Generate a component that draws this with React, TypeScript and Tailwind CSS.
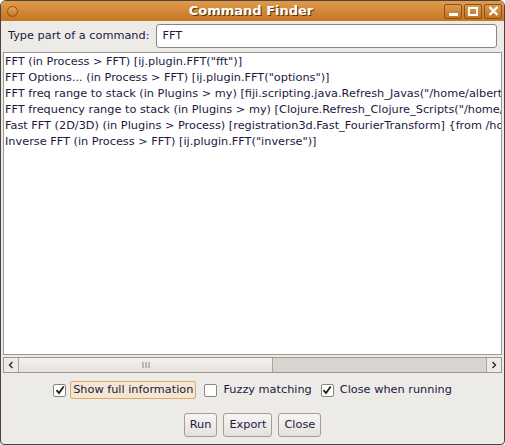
import { ReactNode } from 'react';

const rows = [
  'FFT (in Process > FFT) [ij.plugin.FFT("fft")]',
  'FFT Options... (in Process > FFT) [ij.plugin.FFT("options")]',
  'FFT freq range to stack (in Plugins > my) [fiji.scripting.java.Refresh_Javas("/home/albert/',
  'FFT frequency range to stack (in Plugins > my) [Clojure.Refresh_Clojure_Scripts("/home/',
  'Fast FFT (2D/3D) (in Plugins > Process) [registration3d.Fast_FourierTransform] {from /home',
  'Inverse FFT (in Process > FFT) [ij.plugin.FFT("inverse")]',
];

function Check({ checked }: { checked: boolean }) {
  return (
    <span className="flex h-[13px] w-[13px] shrink-0 items-center justify-center rounded-[2px] border border-[#8a8580] bg-white">
      {checked && (
        <svg width="10" height="10" viewBox="0 0 10 10">
          <path d="M1.5 5.2 L4 8 L8.7 1.5" fill="none" stroke="#1c1c1c" strokeWidth="1.8" />
        </svg>
      )}
    </span>
  );
}

function TitleButton({ children }: { children: ReactNode }) {
  return (
    <span className="flex h-[15px] w-[18px] items-center justify-center rounded-[2px] border border-[#8a5214] bg-gradient-to-b from-[#dc9a50] to-[#c2731f]">
      {children}
    </span>
  );
}

function Button({ label }: { label: string }) {
  return (
    <button className="h-[24px] rounded-[3px] border border-[#a29d96] bg-gradient-to-b from-[#f7f6f5] to-[#e4e1dd] px-[5px] text-[11.3px] text-[#231942]">
      {label}
    </button>
  );
}

export default function App() {
  return (
    <div
      className="flex h-[445px] w-[505px] flex-col overflow-hidden rounded-t-[6px] rounded-b-[4px] border border-[#4a443e] bg-[#edebe8] text-[#22173f]"
      style={{ fontFamily: '"DejaVu Sans", sans-serif' }}
    >
      {/* Title bar */}
      <div className="relative flex h-[20px] shrink-0 items-center bg-gradient-to-b from-[#e19a4c] to-[#c5761f] pl-[6px] pr-[2px]">
        <span className="h-[11px] w-[11px] rounded-full border border-[#8a5214] bg-gradient-to-b from-[#e8a860] to-[#c27420]" />
        <span
          className="flex-1 pl-[40px] text-center text-[13px] font-bold text-white"
          style={{ textShadow: '1px 1px 0 #5a3208' }}
        >
          Command Finder
        </span>
        <div className="flex gap-[2px]">
          <TitleButton>
            <span className="mt-[6px] h-[3px] w-[9px] bg-white" />
          </TitleButton>
          <TitleButton>
            <span className="h-[9px] w-[10px] border-2 border-white" />
          </TitleButton>
          <TitleButton>
            <svg width="11" height="10" viewBox="0 0 11 10">
              <path d="M1.5 1 L9.5 9 M9.5 1 L1.5 9" stroke="white" strokeWidth="2.4" />
            </svg>
          </TitleButton>
        </div>
      </div>

      <div className="flex flex-1 flex-col px-[2px]">
        {/* Search row */}
        <div className="mt-[3px] flex items-center pl-[5px] pr-[5px]">
          <span className="text-[11.3px]">Type part of a command:</span>
          <div className="ml-[7px] flex h-[24px] flex-1 items-center rounded-[3px] border border-[#8a8580] bg-white px-[5px] text-[11.3px]">
            FFT
          </div>
        </div>

        {/* Result list */}
        <div className="mt-[4px] flex-1 overflow-hidden whitespace-nowrap border border-[#9d9893] bg-white pt-[1px] text-[11.3px] leading-[16px]">
          {rows.map((r) => (
            <div key={r} className="pl-[1px]">
              {r}
            </div>
          ))}
        </div>

        {/* Horizontal scrollbar */}
        <div className="mt-[2px] flex h-[16px] shrink-0 border border-[#9d9893] bg-[#d9d4ce]">
          <span className="flex w-[15px] items-center justify-center border-r border-[#aaa49d] bg-[#edebe8]">
            <svg width="6" height="8" viewBox="0 0 6 8">
              <path d="M4.5 1 L1.5 4 L4.5 7" fill="none" stroke="#2a2a2a" strokeWidth="1.4" />
            </svg>
          </span>
          <span className="flex w-[254px] items-center justify-center border-r border-[#aaa49d] bg-gradient-to-b from-[#f3f1ef] to-[#e6e2de]">
            <svg width="8" height="6" viewBox="0 0 8 6">
              <path d="M1 0 V6 M4 0 V6 M7 0 V6" stroke="#8a847d" strokeWidth="1" />
            </svg>
          </span>
          <span className="flex-1" />
          <span className="flex w-[15px] items-center justify-center border-l border-[#aaa49d] bg-[#edebe8]">
            <svg width="6" height="8" viewBox="0 0 6 8">
              <path d="M1.5 1 L4.5 4 L1.5 7" fill="none" stroke="#2a2a2a" strokeWidth="1.4" />
            </svg>
          </span>
        </div>

        {/* Options */}
        <div className="mt-[8px] flex h-[18px] items-center justify-center text-[11.3px]">
          <Check checked />
          <span className="ml-[4px] flex h-[18px] items-center rounded-[2px] border border-[#e0a868] bg-[#f4e6d2] px-[2px]">
            Show full information
          </span>
          <span className="ml-[8px]">
            <Check checked={false} />
          </span>
          <span className="ml-[6px]">Fuzzy matching</span>
          <span className="ml-[9px]">
            <Check checked />
          </span>
          <span className="ml-[6px]">Close when running</span>
        </div>

        {/* Buttons */}
        <div className="mb-[7px] mt-[14px] flex justify-center gap-[6px]">
          <Button label="Run" />
          <Button label="Export" />
          <Button label="Close" />
        </div>
      </div>
    </div>
  );
}
